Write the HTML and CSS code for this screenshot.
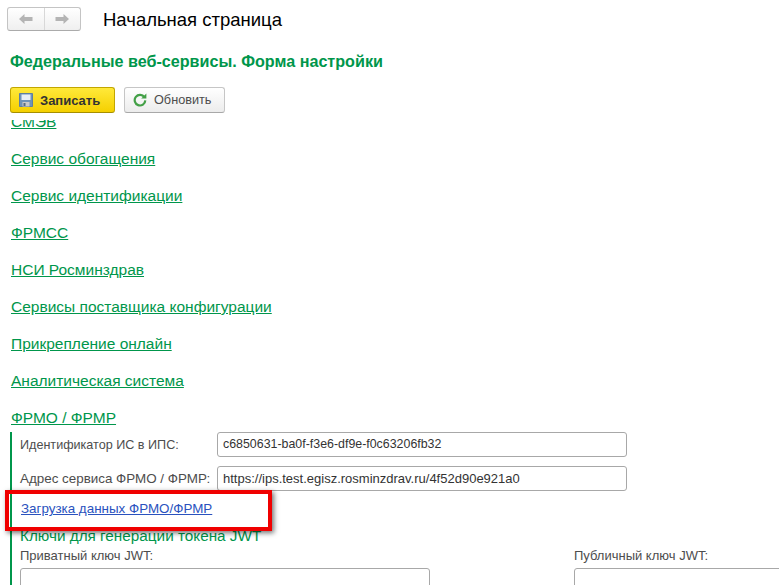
FILE: index.html
```html
<!DOCTYPE html>
<html lang="ru">
<head>
<meta charset="utf-8">
<title>Начальная страница</title>
<link rel="stylesheet" href="styles.css">
</head>
<body>
<div class="page">
  <header class="topbar">
    <div class="nav">
      <button class="nav-btn"><svg width="16" height="12" viewBox="0 0 16 12"><path d="M1 6 L6.5 1 V4 H14.5 V8 H6.5 V11 Z" fill="#b4b4b4"/></svg></button>
      <button class="nav-btn"><svg width="16" height="12" viewBox="0 0 16 12"><path d="M15 6 L9.5 1 V4 H1.5 V8 H9.5 V11 Z" fill="#b4b4b4"/></svg></button>
    </div>
    <div class="page-title">Начальная страница</div>
  </header>
  <h1 class="form-title">Федеральные веб-сервисы. Форма настройки</h1>
  <div class="toolbar">
    <button class="btn btn-primary">
      <svg width="14" height="14" viewBox="0 0 14 14"><path d="M0.5 0.5 H13.5 V13.5 H0.5 Z" fill="#6f93b8" stroke="#5f7f9f"/><rect x="2.5" y="1.5" width="9" height="5.5" fill="#e8eef5"/><rect x="3.5" y="9" width="7" height="4.5" fill="#c9c9c9"/><rect x="4.5" y="10" width="2" height="3" fill="#5a6d82"/></svg>
      Записать
    </button>
    <button class="btn btn-default">
      <svg width="14" height="14" viewBox="0 0 14 14"><path d="M11.4 4.2 A5.3 5.3 0 1 0 12.3 7.4" fill="none" stroke="#43a047" stroke-width="2.2"/><path d="M8.2 5.6 H13.4 V0.4 Z" fill="#43a047"/></svg>
      Обновить
    </button>
  </div>
  <main class="scroller">
    <div class="content">
      <a class="group-link" href="#">СМЭВ</a>
      <a class="group-link" href="#">Сервис обогащения</a>
      <a class="group-link" href="#">Сервис идентификации</a>
      <a class="group-link" href="#">ФРМСС</a>
      <a class="group-link" href="#">НСИ Росминздрав</a>
      <a class="group-link" href="#">Сервисы поставщика конфигурации</a>
      <a class="group-link" href="#">Прикрепление онлайн</a>
      <a class="group-link" href="#">Аналитическая система</a>
      <a class="group-link last" href="#">ФРМО / ФРМР</a>
      <section class="group">
        <div class="field">
          <label class="field-label">Идентификатор ИС в ИПС:</label>
          <div class="input input-id">c6850631-ba0f-f3e6-df9e-f0c63206fb32</div>
        </div>
        <div class="field">
          <label class="field-label field-label-wide">Адрес сервиса ФРМО / ФРМР:</label>
          <div class="input">https://ips.test.egisz.rosminzdrav.ru/4f52d90e921a0</div>
        </div>
        <a class="load-link" href="#">Загрузка данных ФРМО/ФРМР</a>
        <h2 class="subhead">Ключи для генерации токена JWT</h2>
        <div class="keys">
          <div class="key key-private">
            <label class="key-label">Приватный ключ JWT:</label>
            <div class="textarea"></div>
          </div>
          <div class="key key-public">
            <label class="key-label">Публичный ключ JWT:</label>
            <div class="textarea"></div>
          </div>
        </div>
      </section>
    </div>
  </main>
  <div class="highlight"></div>
</div>
</body>
</html>
```
FILE: styles.css
```css
* { box-sizing: border-box; }
html, body { margin: 0; padding: 0; background: #fff; }
body { font-family: "Liberation Sans", Arial, sans-serif; overflow: hidden; }
.page { position: relative; width: 779px; height: 585px; overflow: hidden; display: flex; flex-direction: column; }

.topbar { display: flex; align-items: center; padding: 7px 0 0 7px; height: 31px; }
.nav { display: flex; width: 74px; height: 24px; border: 1px solid #c4c4c4; border-bottom-color: #ababab; border-radius: 3px; background: linear-gradient(#fff, #efefef); }
.nav-btn { flex: 1; padding: 0; border: 0; background: none; display: flex; align-items: center; justify-content: center; }
.nav-btn + .nav-btn { border-left: 1px solid #d8d8d8; }
.page-title { margin: 2px 0 0 22px; font-size: 18.5px; line-height: 24px; color: #000; }

.form-title { margin: 21px 0 0 10px; font-size: 16.15px; line-height: 18px; font-weight: bold; color: #00964b; }

.toolbar { display: flex; gap: 9px; margin: 17px 0 0 10px; }
.btn { display: flex; align-items: center; height: 26px; padding: 0; border-radius: 3px; font-family: inherit; }
.btn svg { flex: none; }
.btn-primary { width: 105px; padding-left: 8px; gap: 7px; border: 1px solid #c2a600; border-bottom-color: #a68f00; background: linear-gradient(#ffe93a, #f5d000); color: #333; font-size: 13px; font-weight: bold; }
.btn-default { width: 101px; padding-left: 8px; gap: 7px; border: 1px solid #c6c6c6; border-bottom-color: #a8a8a8; background: linear-gradient(#fff, #ececec); color: #4d4d4d; font-size: 12.7px; }

.scroller { flex: 1; min-height: 0; margin-top: 7px; overflow: hidden; }
.content { margin-top: -7px; padding-left: 11px; }
.group-link { display: block; width: max-content; margin-bottom: 19px; font-size: 15.5px; line-height: 18px; color: #00964b; }
.group-link.last { margin-bottom: 5px; }

.group { margin-left: -1px; padding-left: 8px; border-left: 2px solid #00964b; }
.field { display: flex; align-items: center; height: 25px; margin-bottom: 9px; }
.field-label { width: 197px; font-size: 12.6px; color: #4d4d4d; white-space: nowrap; }
.field-label-wide { font-size: 13.4px; }
.input { width: 410px; height: 25px; padding: 0 5px; border: 1px solid #a8a8a8; border-radius: 3px; font-size: 13px; line-height: 23px; color: #333; white-space: nowrap; }
.input-id { font-size: 12.4px; }

.load-link { display: block; width: max-content; margin: 1px 0 0 1px; font-size: 13.4px; line-height: 17px; color: #2a52be; }
.subhead { margin: 10px 0 0; font-size: 15.3px; line-height: 17px; font-weight: normal; color: #00964b; }
.keys { display: flex; margin-top: 5px; }
.key { flex: none; }
.key-private { width: 554px; }
.key-public { width: 300px; }
.key-label { display: block; font-size: 13px; line-height: 14px; color: #4d4d4d; }
.textarea { width: 410px; height: 80px; margin-top: 5px; border: 1px solid #a8a8a8; border-radius: 3px; }

.highlight { position: absolute; left: 5px; top: 490px; width: 267px; height: 41px; border: 4px solid #f00000; box-shadow: 2px 2px 5px rgba(0,0,0,.55); }
```
